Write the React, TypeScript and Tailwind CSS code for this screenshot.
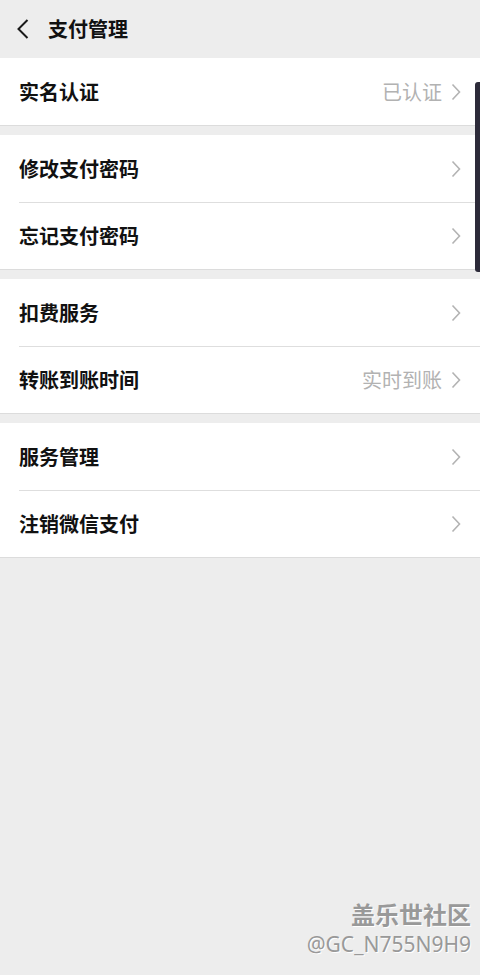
type Row = { label: string; value?: string }

const sections: Row[][] = [
  [{ label: '实名认证', value: '已认证' }],
  [{ label: '修改支付密码' }, { label: '忘记支付密码' }],
  [{ label: '扣费服务' }, { label: '转账到账时间', value: '实时到账' }],
  [{ label: '服务管理' }, { label: '注销微信支付' }],
]

const font = { fontFamily: '"Noto Sans CJK SC", "Noto Sans", sans-serif' }

function Chevron() {
  return (
    <svg width="10" height="18" viewBox="0 0 10 18" className="ml-[9px]" aria-hidden>
      <path d="M1.5 1.5 L8.5 9 L1.5 16.5" fill="none" stroke="#b3b3b3" strokeWidth="1.6" />
    </svg>
  )
}

function Section({ rows }: { rows: Row[] }) {
  return (
    <div className="bg-white shadow-[0_1px_0_#dcdcdc]">
      {rows.map((r, i) => (
        <div key={r.label} className="pl-[19px]">
          <div
            className={`flex h-[67px] items-center pr-[19px] ${i > 0 ? 'border-t border-[#dedede]' : ''}`}
          >
            <span className="flex-1 text-[20px] font-bold text-[#111]">{r.label}</span>
            {r.value && <span className="text-[20px] text-[#b2b2b2]">{r.value}</span>}
            <Chevron />
          </div>
        </div>
      ))}
    </div>
  )
}

export default function App() {
  return (
    <div className="relative flex min-h-[975px] w-[480px] flex-col bg-[#ededed]" style={font}>
      <header className="flex h-[58px] items-center">
        <svg width="14" height="20" viewBox="0 0 14 20" className="ml-[16px]" aria-hidden>
          <path d="M11.5 1 L2.5 10 L11.5 19" fill="none" stroke="#1a1a1a" strokeWidth="2" />
        </svg>
        <h1 className="ml-[18px] text-[20px] font-bold text-[#111]">支付管理</h1>
      </header>
      <div className="flex flex-col gap-[10px]">
        {sections.map((s, i) => (
          <Section key={i} rows={s} />
        ))}
      </div>

      <div className="absolute right-0 top-[82px] h-[190px] w-[5px] rounded-l-[3px] bg-[#2d2b3a]" />

      <div className="absolute bottom-[17px] right-[9px] flex flex-col items-end text-[#999] [text-shadow:1px_1px_0_#ffffff]">
        <span className="text-[24px] font-bold leading-[32px]">盖乐世社区</span>
        <span className="text-[21px] leading-[28px]" style={{ fontFamily: '"Noto Sans", sans-serif' }}>
          @GC_N755N9H9
        </span>
      </div>
    </div>
  )
}
